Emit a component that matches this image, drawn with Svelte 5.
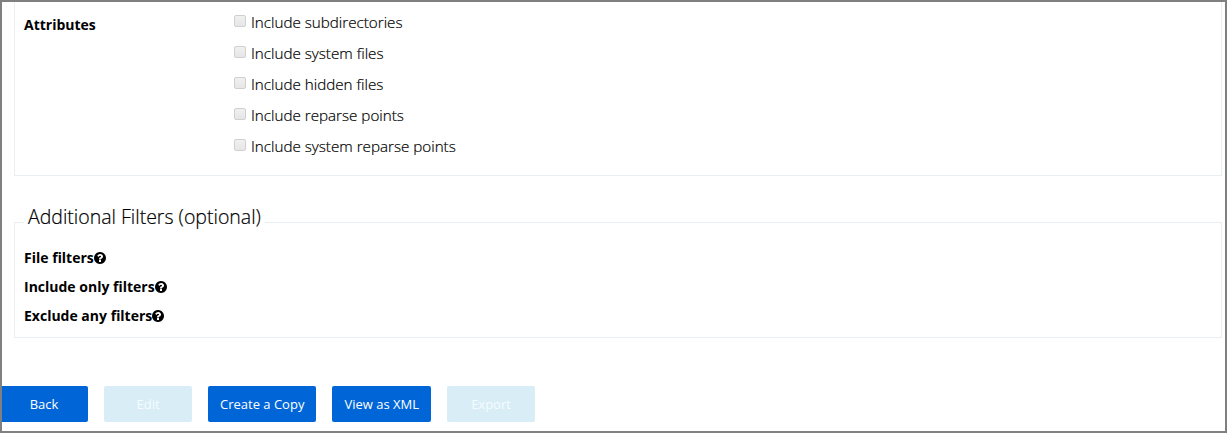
<script>
  const attributes = ['Include subdirectories', 'Include system files', 'Include hidden files', 'Include reparse points', 'Include system reparse points'];
  const filters = ['File filters', 'Include only filters', 'Exclude any filters'];
  const actions = [
    { label: 'Back' },
    { label: 'Edit', disabled: true },
    { label: 'Create a Copy' },
    { label: 'View as XML' },
    { label: 'Export', disabled: true }
  ];
</script>

<main>
  <section class="attributes">
    <strong>Attributes</strong>
    <div class="options">
      {#each attributes as name}
        <label><span class="box"></span>{name}</label>
      {/each}
    </div>
  </section>
  <fieldset>
    <legend>Additional Filters (optional)</legend>
    {#each filters as name}
      <div class="filter">
        <strong>{name}</strong>
        <svg viewBox="0 0 1536 1536" width="12" height="12"><path d="M896 1248v-192q0-14-9-23t-23-9H672q-14 0-23 9t-9 23v192q0 14 9 23t23 9h192q14 0 23-9t9-23zm256-672q0-88-55.500-163T958 297t-170-41q-243 0-371 213-15 24 8 42l132 100q7 6 19 6 16 0 25-12 53-68 86-92 34-24 86-24 48 0 85.500 26t37.500 59q0 38-20 61t-68 45q-63 28-115.500 86.500T640 892v36q0 14 9 23t23 9h192q14 0 23-9t9-23q0-19 21.500-49.500T972 829q32-18 49-28.500t46-35 44.500-48 28-60.500 12.500-81zm384 192q0 209-103 385.500T1153.500 1433 768 1536t-385.500-103T103 1153.500 0 768t103-385.500T382.500 103 768 0t385.500 103T1433 382.500 1536 768z"/></svg>
      </div>
    {/each}
  </fieldset>
  <div class="actions">
    {#each actions as action}
      <button disabled={action.disabled}>{action.label}</button>
    {/each}
  </div>
</main>

<style>
  main {
    box-sizing: border-box;
    height: 433px;
    border: 2px solid #808080;
    background: #fff;
    color: #000;
    font-family: "Open Sans", sans-serif;
    font-size: 14px;
    overflow: hidden;
  }
  .attributes {
    display: flex;
    box-sizing: border-box;
    height: 174px;
    margin: 0 3px 0 12px;
    padding: 5px 9px 0;
    border: solid #e9eef2;
    border-width: 0 1px 1px;
  }
  .attributes strong { width: 210px; line-height: 36px; }
  strong { font-size: 14px; font-weight: 700; }
  label {
    display: flex;
    height: 31px;
    line-height: 31px;
    font-size: 15.2px;
    font-weight: 300;
    -webkit-text-stroke: 0.2px #000;
  }
  .box {
    box-sizing: border-box;
    width: 12px;
    height: 12px;
    margin: 8px 5px 0 0;
    border: 1px solid #d0d0d0;
    border-radius: 2px;
    background: linear-gradient(#f0f0f0, #e6e6e6);
  }
  fieldset {
    box-sizing: border-box;
    height: 134px;
    margin: 28px 3px 0 12px;
    padding: 0 9px;
    border: 1px solid #e9eef2;
  }
  legend {
    padding: 0 4px 10px;
    font-size: 19.5px;
    font-weight: 300;
    line-height: 26px;
    -webkit-text-stroke: 0.2px #000;
  }
  .filter { display: flex; align-items: center; height: 29px; }
  legend + .filter { margin-top: 3px; }
  .actions { display: flex; gap: 16px; margin-top: 48px; }
  button {
    height: 36px;
    min-width: 88px;
    padding: 0 12px;
    border: 0;
    border-radius: 2px;
    background: #0066d8;
    color: #fff;
    font: 13px "Open Sans", sans-serif;
  }
  button:first-child { margin-left: -2px; }
  button:disabled { background: #d8edf6; color: #f6fcff; }
</style>
